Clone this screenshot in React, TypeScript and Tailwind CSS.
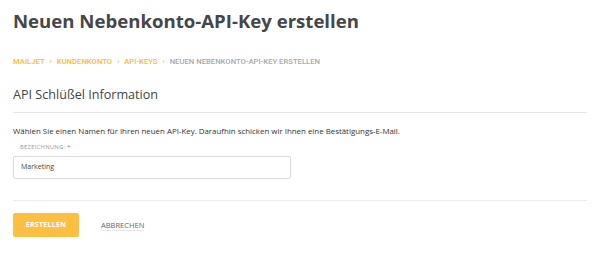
export default function App() {
  const crumbs = ["Mailjet", "Kundenkonto", "API-Keys"];
  return (
    <div className="min-h-[263px] w-[600px] bg-white px-[13px] pt-[7px] font-['Open_Sans',sans-serif] text-[#333]">
      {/* Page title */}
      <h1 className="text-[18.6px] font-bold leading-[28px] text-[#45464a]">
        Neuen Nebenkonto-API-Key erstellen
      </h1>

      {/* Breadcrumb */}
      <nav className="mt-[22px] flex items-center font-['Roboto',sans-serif] text-[7.7px] font-medium uppercase leading-[10px]">
        {crumbs.map((c) => (
          <span key={c} className="flex items-center text-[#fdb92c]">
            {c}
            <span className="mx-[5px] text-[7px]">›</span>
          </span>
        ))}
        <span className="text-[#a9a9a9]">Neuen Nebenkonto-API-Key erstellen</span>
      </nav>

      {/* Section */}
      <h2 className="mt-[19px] text-[12.6px] leading-[18px] text-[#444]">API Schlüßel Information</h2>
      <div className="mt-[8px] h-px w-[574px] bg-[#e6e6e6]" />

      <p className="mt-[12px] text-[7.9px] leading-[12px] text-[#333]">
        Wählen Sie einen Namen für Ihren neuen API-Key. Daraufhin schicken wir Ihnen eine Bestätigungs-E-Mail.
      </p>

      <label className="mt-[6px] block pl-[7px] text-[5.8px] uppercase leading-[9px] tracking-[0.3px] text-[#9a9a9a]">
        Bezeichnung: <span className="text-[#e5534b]">*</span>
      </label>
      <div className="mt-[4px] flex h-[23px] w-[278px] items-center rounded-[2px] border border-[#dcdcdc] px-[7px] text-[7px] text-[#444]">
        Marketing
      </div>

      <div className="mt-[21px] h-px w-[574px] bg-[#ececec]" />

      {/* Actions */}
      <div className="mt-[12px] flex items-center">
        <button className="flex h-[24px] w-[66px] items-center justify-center rounded-[2px] bg-[#ffbf40] text-[7px] font-bold tracking-[0.3px] text-white">
          ERSTELLEN
        </button>
        <button className="ml-[22px] border-b border-[#e6e6e6] text-[7.5px] leading-[10px] text-[#666]">
          ABBRECHEN
        </button>
      </div>
    </div>
  );
}
